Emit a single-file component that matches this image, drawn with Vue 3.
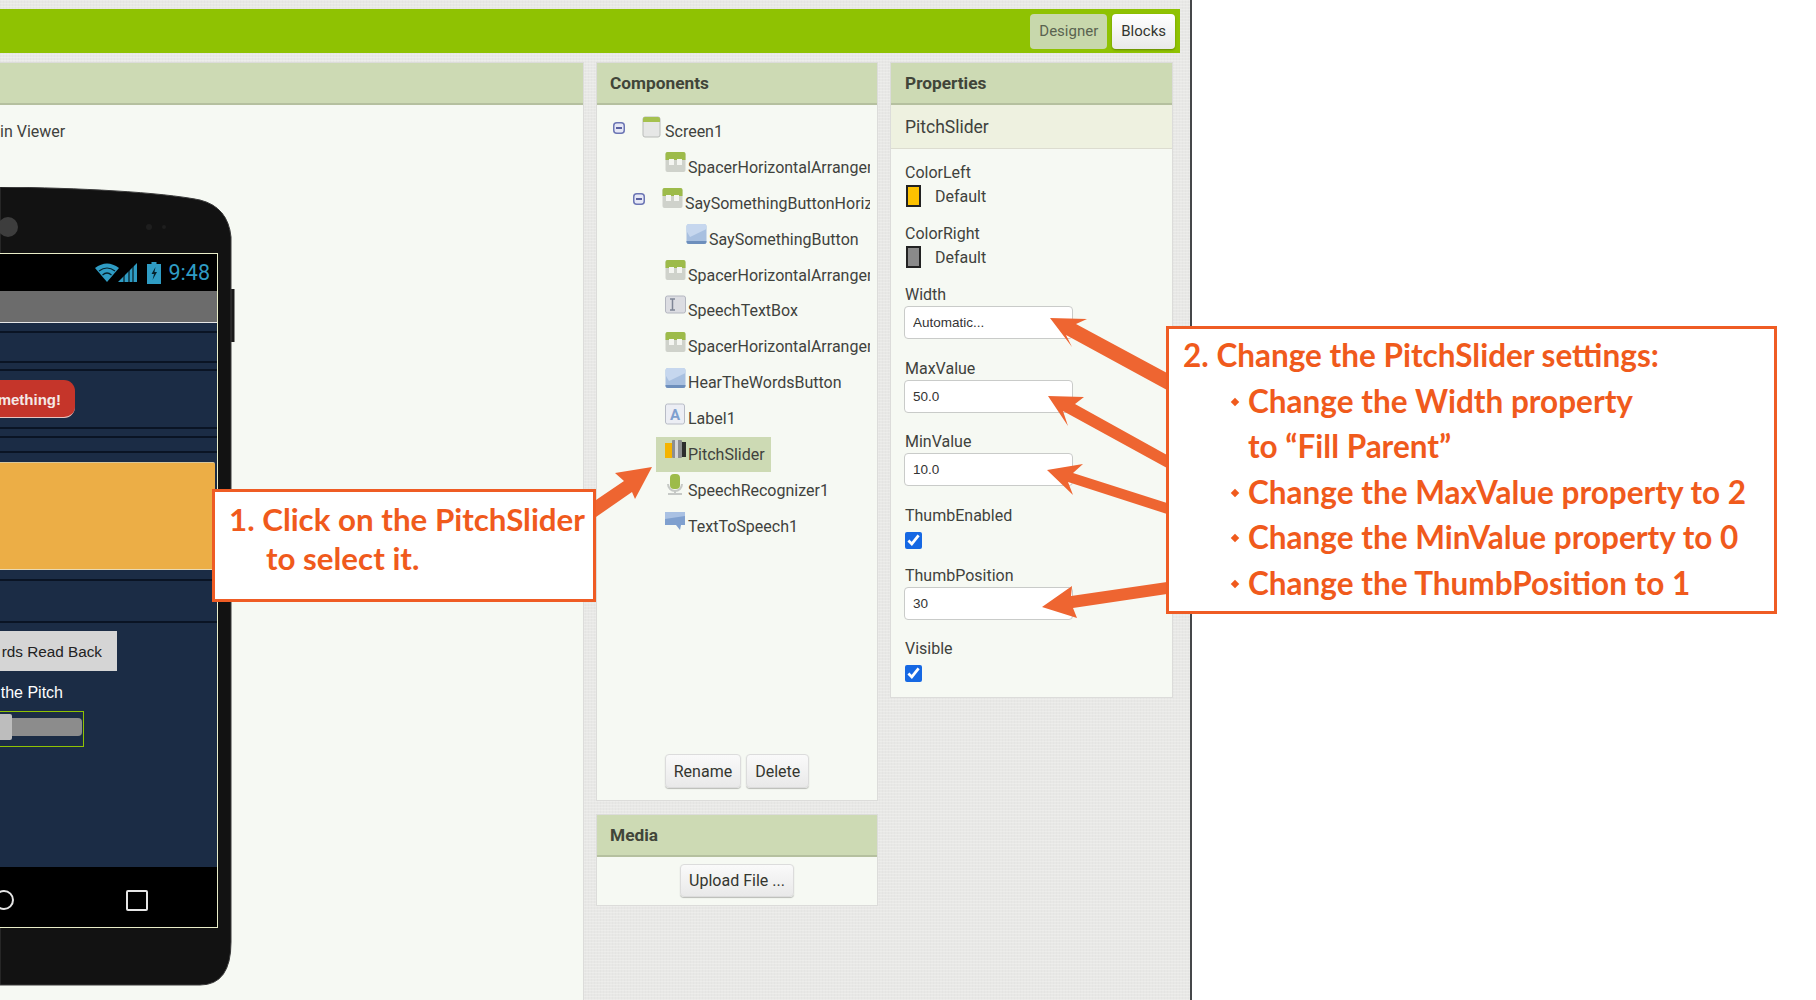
<script setup>
const tree = [
  { name: 'Screen1', icon: 'screen', pad: 16, toggle: true },
  { name: 'SpacerHorizontalArrangement1', icon: 'arrange', pad: 68 },
  { name: 'SaySomethingButtonHorizontalArrangement', icon: 'arrange', pad: 36, toggle: true },
  { name: 'SaySomethingButton', icon: 'button', pad: 89 },
  { name: 'SpacerHorizontalArrangement2', icon: 'arrange', pad: 68 },
  { name: 'SpeechTextBox', icon: 'textbox', pad: 68 },
  { name: 'SpacerHorizontalArrangement3', icon: 'arrange', pad: 68 },
  { name: 'HearTheWordsButton', icon: 'button', pad: 68 },
  { name: 'Label1', icon: 'label', pad: 68 },
  { name: 'PitchSlider', icon: 'slider', pad: 68, selected: true },
  { name: 'SpeechRecognizer1', icon: 'speech', pad: 68 },
  { name: 'TextToSpeech1', icon: 'tts', pad: 68 },
]

const props = [
  { label: 'ColorLeft', type: 'color', color: '#fdc200' },
  { label: 'ColorRight', type: 'color', color: '#8a8a8a' },
  { label: 'Width', type: 'input', value: 'Automatic...' },
  { label: 'MaxValue', type: 'input', value: '50.0' },
  { label: 'MinValue', type: 'input', value: '10.0' },
  { label: 'ThumbEnabled', type: 'check' },
  { label: 'ThumbPosition', type: 'input', value: '30' },
  { label: 'Visible', type: 'check' },
]

const steps = [
  ['Change the Width property', 'to “Fill Parent”'],
  ['Change the MaxValue property to 2'],
  ['Change the MinValue property to 0'],
  ['Change the ThumbPosition to 1'],
]

const arrows = [
  '652,467 615,473 624,481 596,500 596,517 632,492 635,499',
  '1050,318 1087,319 1076,324 1167,373 1167,390 1066,335 1072,347',
  '1048,396 1084,397 1075,404 1167,455 1167,468 1063,411 1068,426',
  '1047,470 1083,464 1073,473 1167,503 1167,514 1068,482 1073,495',
  '1042,607 1072,586 1071,596 1167,582 1167,594 1073,608 1077,618',
]
</script>

<template>
  <div class="page">
    <div class="studio">
      <header class="topbar">
        <button class="tab tab-on">Designer</button>
        <button class="tab">Blocks</button>
      </header>

      <div class="columns">
        <!-- viewer -->
        <section class="panel viewer">
          <div class="panel-head"></div>
          <div class="viewer-body">
            <div class="hidden-note">in Viewer</div>
            <div class="phone">
              <svg class="bezel" width="236" height="800" viewBox="0 0 236 800">
                <rect x="230" y="102" width="4.5" height="53" fill="#1a1a1a" />
                <path d="M0 0 C80 1 160 5 200 13 Q228 20 231 50 L231 755 Q231 798 200 798 L0 798 Z" fill="#121212" stroke="#3a3a3a" stroke-width="1" />
                <circle cx="8" cy="40" r="10" fill="#3d3d3d" />
                <circle cx="149" cy="40" r="3" fill="#1e1e1e" />
                <circle cx="164" cy="40" r="2" fill="#1e1e1e" />
              </svg>
              <div class="screen">
                <div class="statusbar">
                  <svg width="42" height="22" viewBox="0 0 42 22">
                    <path d="M0 6 Q12 -3 24 6 L12 20 Z" fill="#2f9cc4" />
                    <path d="M4 9 Q12 3 20 9" fill="none" stroke="#06222c" stroke-width="1.2" />
                    <path d="M7.5 13 Q12 9 16.5 13" fill="none" stroke="#06222c" stroke-width="1.2" />
                    <path d="M23 20 L42 1 L42 20 Z" fill="#2f9cc4" />
                    <path d="M29 20V10M34 20V6M38 20V3" stroke="#000" stroke-width="1" />
                  </svg>
                  <svg class="battery" width="14" height="22" viewBox="0 0 14 22">
                    <path d="M4.5 0H9.5V2H14V22H0V2H4.5Z" fill="#2f9cc4" />
                    <path d="M8.5 5 L4.5 12 H7 L5.5 18 L10 10 H7.5Z" fill="#06222c" />
                  </svg>
                  <span class="clock">9:48</span>
                </div>
                <div class="titlebar"></div>
                <div class="app-body">
                  <div class="stripe" style="height: 8px"></div>
                  <div class="stripe" style="height: 28px"></div>
                  <div class="stripe" style="height: 6px"></div>
                  <div class="stripe say-row"><span class="say-btn">mething!</span></div>
                  <div class="stripe" style="height: 7px"></div>
                  <div class="stripe" style="height: 13px"></div>
                  <div class="textbox-fill"></div>
                  <div class="stripe" style="height: 9px"></div>
                  <div class="stripe" style="height: 40px"></div>
                  <div class="hear-btn">rds Read Back</div>
                  <div class="pitch-label">the Pitch</div>
                  <div class="slider-box">
                    <span class="slider-track"></span>
                    <span class="slider-thumb"></span>
                  </div>
                </div>
                <div class="navbar">
                  <span class="nav-circle"></span>
                  <span class="nav-square"></span>
                </div>
              </div>
            </div>
          </div>
        </section>

        <!-- components + media -->
        <div class="middle">
          <section class="panel components">
            <div class="panel-head">Components</div>
            <div class="tree">
              <div v-for="n in tree" :key="n.name" class="node" :style="{ paddingLeft: n.pad + 'px' }">
                <div class="node-inner" :class="{ selected: n.selected }">
                  <svg v-if="n.toggle" class="toggle" width="12" height="12" viewBox="0 0 12 12">
                    <rect x="0.75" y="0.75" width="10.5" height="10.5" rx="3" fill="#e6e8f6" stroke="#6c76b4" stroke-width="1.5" />
                    <rect x="3" y="5.2" width="6" height="1.6" fill="#39408a" />
                  </svg>
                  <svg class="ico" width="21" height="22" viewBox="0 0 21 22">
                    <template v-if="n.icon === 'screen'">
                      <rect x="1" y="1" width="17" height="20" rx="2" fill="#e6e7e6" stroke="#b9bcb9" />
                      <path d="M1 6V3a2 2 0 0 1 2-2h13a2 2 0 0 1 2 2v3Z" fill="#a5c14f" />
                    </template>
                    <template v-else-if="n.icon === 'arrange'">
                      <rect x="0.5" y="1" width="20" height="20" rx="2" fill="#cfd2cb" />
                      <path d="M0.5 9V3a2 2 0 0 1 2-2h16a2 2 0 0 1 2 2v6Z" fill="#9dbb4a" />
                      <rect x="4" y="8" width="5" height="6" fill="#f4f5f1" />
                      <rect x="12" y="8" width="5" height="6" fill="#f4f5f1" />
                    </template>
                    <template v-else-if="n.icon === 'button'">
                      <rect x="0.5" y="1" width="20" height="20" rx="2.5" fill="#a8c0e0" />
                      <path d="M0.5 8V3.5a2.5 2.5 0 0 1 2.5-2.5h15a2.5 2.5 0 0 1 2.5 2.5V6L4 14Z" fill="#c6d7ee" />
                      <path d="M0.5 18H20.5V18.5a2.5 2.5 0 0 1-2.5 2.5H3a2.5 2.5 0 0 1-2.5-2.5Z" fill="#6d8fbc" />
                    </template>
                    <template v-else-if="n.icon === 'textbox'">
                      <rect x="0.5" y="1" width="20" height="17" rx="2" fill="#dcdde2" stroke="#b4b7c0" />
                      <path d="M5 4H10M5 15H10M7.5 4V15" stroke="#7f8696" stroke-width="1.5" fill="none" />
                    </template>
                    <template v-else-if="n.icon === 'label'">
                      <rect x="0.5" y="1" width="19" height="20" rx="2" fill="#eceef4" stroke="#b8bcc6" />
                      <text x="10" y="16.5" text-anchor="middle" class="ico-a">A</text>
                    </template>
                    <template v-else-if="n.icon === 'slider'">
                      <rect x="0" y="4" width="7" height="15" fill="#f5b400" />
                      <rect x="7" y="1" width="10" height="18" rx="1" fill="#8d8f90" />
                      <rect x="10" y="1" width="3" height="18" fill="#d5d6d6" />
                      <rect x="17" y="3" width="4" height="15" fill="#2d2d2d" />
                    </template>
                    <template v-else-if="n.icon === 'speech'">
                      <path d="M3 10a7 7 0 0 0 14 0" fill="none" stroke="#c6c9c6" stroke-width="2" />
                      <rect x="5" y="0" width="10" height="15" rx="4" fill="#9dbb4a" />
                      <rect x="3" y="19" width="14" height="2" fill="#c6c9c6" />
                      <rect x="9" y="16" width="2" height="4" fill="#c6c9c6" />
                    </template>
                    <template v-else>
                      <path d="M0 2H20V15H16L15 20L11 15H0Z" fill="#7fa0cf" />
                      <path d="M0 2H20V6L0 9Z" fill="#a9c1e3" />
                    </template>
                  </svg>
                  <span class="node-name">{{ n.name }}</span>
                </div>
              </div>
            </div>
            <div class="tree-actions">
              <button class="btn">Rename</button>
              <button class="btn">Delete</button>
            </div>
          </section>

          <section class="panel media">
            <div class="panel-head">Media</div>
            <div class="media-body"><button class="btn">Upload File ...</button></div>
          </section>
        </div>

        <!-- properties -->
        <section class="panel properties">
          <div class="panel-head">Properties</div>
          <div class="subhead">PitchSlider</div>
          <div class="prop-list">
            <div v-for="p in props" :key="p.label" class="prop" :class="'prop-' + p.type">
              <div class="prop-label">{{ p.label }}</div>
              <div v-if="p.type === 'color'" class="color-row">
                <span class="swatch" :style="{ background: p.color }"></span>
                <span>Default</span>
              </div>
              <input v-else-if="p.type === 'input'" class="prop-input" type="text" :value="p.value" readonly />
              <input v-else class="prop-check" type="checkbox" checked />
            </div>
          </div>
        </section>
      </div>
    </div>

    <!-- callouts -->
    <svg class="arrows" width="1816" height="1000" viewBox="0 0 1816 1000">
      <polygon v-for="a in arrows" :key="a" :points="a" fill="#ee6531" />
    </svg>

    <div class="callout callout-one">
      <div>1. Click on the PitchSlider</div>
      <div class="indent">to select it.</div>
    </div>

    <div class="callout callout-two">
      <div>2. Change the PitchSlider settings:</div>
      <ul class="steps">
        <li v-for="s in steps" :key="s[0]">
          <span class="diamond"></span>
          <div>
            <div v-for="line in s" :key="line">{{ line }}</div>
          </div>
        </li>
      </ul>
    </div>
  </div>
</template>

<style>
html, body { margin: 0; overflow: hidden; background: #fff; }
</style>

<style scoped>
.page {
  position: relative;
  width: 1816px;
  height: 1000px;
  overflow: hidden;
  background: #fff;
  font-family: Roboto, "Liberation Sans", sans-serif;
  color: #3f423d;
}

.studio {
  box-sizing: border-box;
  width: 1192px;
  height: 1000px;
  padding-top: 9px;
  background-color: #e8e8e6;
  background-image:
    repeating-linear-gradient(0deg, rgba(255,255,255,0.22) 0 1px, transparent 1px 3px),
    repeating-linear-gradient(90deg, rgba(0,0,0,0.015) 0 1px, transparent 1px 3px);
  border-right: 2px solid #45474a;
  overflow: hidden;
}

/* ═══ top bar ═══ */
.topbar {
  display: flex;
  justify-content: flex-end;
  align-items: center;
  gap: 5px;
  width: 1180px;
  height: 44px;
  padding-right: 5px;
  box-sizing: border-box;
  background: #8fc202;
}
.tab {
  height: 35px;
  padding: 0 9px;
  border: none;
  border-radius: 4px;
  background: linear-gradient(#ffffff, #e9e9e9);
  box-shadow: 0 1px 2px rgba(0,0,0,0.3);
  font: 15px Roboto, sans-serif;
  color: #33352f;
}
.tab-on {
  background: #c8d8ac;
  color: #5a6350;
  box-shadow: none;
}

/* ═══ panels ═══ */
.columns {
  display: flex;
  align-items: flex-start;
  gap: 14px;
  margin-top: 10px;
}
.panel {
  background: #f6f9f3;
  box-shadow: 0 0 0 1px #dcdcda;
}
.panel-head {
  box-sizing: border-box;
  height: 42px;
  padding: 0 13px;
  line-height: 41px;
  background: #cddab4;
  border-bottom: 2px solid #b5c09f;
  font-weight: 700;
  font-size: 17.3px;
  color: #414539;
}

.viewer {
  width: 583px;
  height: 937px;
}
.viewer-body {
  display: flex;
  flex-direction: column;
  align-items: flex-start;
}
.hidden-note {
  margin-top: 17px;
  height: 19px;
  line-height: 19px;
  font-size: 16px;
}

/* ═══ phone ═══ */
.phone {
  position: relative;
  box-sizing: border-box;
  width: 236px;
  height: 800px;
  margin-top: 46px;
  padding-top: 66px;
}
.bezel {
  position: absolute;
  left: 0;
  top: 0;
}
.screen {
  position: relative;
  box-sizing: border-box;
  width: 218px;
  height: 675px;
  display: flex;
  flex-direction: column;
  border: 1px solid #e9edc8;
  border-left: none;
  background: #1b2c45;
}
.statusbar {
  display: flex;
  justify-content: flex-end;
  align-items: center;
  height: 37px;
  padding: 0 7px 0 0;
  background: #000;
}
.battery { margin-left: 10px; }
.clock {
  margin-left: 8px;
  font-size: 21.5px;
  color: #2f9cc4;
}
.titlebar {
  height: 31px;
  background: #6c6c6c;
  border-bottom: 1px solid #e8e8e8;
}
.app-body {
  flex: 1;
  display: flex;
  flex-direction: column;
  overflow: hidden;
}
.stripe {
  flex: none;
  border-bottom: 2px solid #0a1424;
}
.say-row {
  display: flex;
  align-items: center;
  height: 56px;
}
.say-btn {
  box-sizing: border-box;
  display: flex;
  justify-content: flex-end;
  width: 75px;
  height: 38px;
  padding-right: 14px;
  white-space: nowrap;
  background: #c5352a;
  border-radius: 0 11px 11px 0;
  border-bottom: 1px solid #e6c4c0;
  font: 700 15px/40px "Liberation Sans", sans-serif;
  color: #f4e9e6;
}
.textbox-fill {
  flex: none;
  height: 108px;
  margin: 9px 2px 0 0;
  background: #ecae46;
  border-radius: 0 2px 0 0;
  border-top: 1px solid #d9c79b;
  border-bottom: 1px solid #e8d9b4;
  box-sizing: border-box;
}
.hear-btn {
  flex: none;
  display: flex;
  justify-content: flex-end;
  width: 117px;
  height: 40px;
  margin-top: 8px;
  background: #d5d5d5;
  padding-right: 15px;
  box-sizing: border-box;
  white-space: nowrap;
  font: 15.3px/41px "Liberation Sans", sans-serif;
  color: #222;
}
.pitch-label {
  flex: none;
  display: flex;
  justify-content: flex-end;
  width: 63px;
  height: 20px;
  margin-top: 11px;
  white-space: nowrap;
  font: 16px/21px "Liberation Sans", sans-serif;
  color: #fff;
}
.slider-box {
  flex: none;
  position: relative;
  box-sizing: border-box;
  width: 84px;
  height: 36px;
  margin-top: 9px;
  border: 1px solid #8fc202;
  border-left: none;
}
.slider-track {
  position: absolute;
  left: 0;
  right: 1px;
  top: 6px;
  height: 18px;
  background: #8c8c8c;
  border-radius: 0 4px 4px 0;
}
.slider-thumb {
  position: absolute;
  left: 0;
  top: 2px;
  width: 12px;
  height: 26px;
  background: #bdbdbd;
  border-radius: 0 2px 2px 0;
}
.navbar {
  position: relative;
  flex: none;
  height: 60px;
  background: #000;
}
.nav-circle {
  position: absolute;
  left: -6px;
  top: 23px;
  width: 20px;
  height: 20px;
  border: 2px solid #e6e6e6;
  border-radius: 50%;
  box-sizing: border-box;
}
.nav-square {
  position: absolute;
  left: 126px;
  top: 23px;
  width: 22px;
  height: 21px;
  border: 2px solid #e6e6e6;
  border-radius: 2px;
  box-sizing: border-box;
}

/* ═══ components ═══ */
.middle {
  display: flex;
  flex-direction: column;
  gap: 15px;
  width: 280px;
}
.components {
  display: flex;
  flex-direction: column;
  height: 737px;
}
.tree {
  flex: 1;
  margin-right: 7px;
  padding-top: 9px;
  overflow: hidden;
}
.node {
  height: 35.9px;
  box-sizing: border-box;
}
.node-inner {
  display: flex;
  align-items: center;
  height: 35px;
  white-space: nowrap;
}
.node-inner.selected {
  width: 115px;
  margin-left: -9px;
  padding-left: 9px;
  box-sizing: border-box;
  background: #cddab4;
}
.toggle {
  flex: none;
  margin: -8px 17px 0 0;
}
.ico {
  flex: none;
  margin: -10px 2px 0 0;
}
.ico-a {
  font: 700 15px Roboto, sans-serif;
  fill: #7fa0cf;
}
.node-name {
  font-size: 16px;
}
.tree-actions {
  display: flex;
  justify-content: center;
  gap: 5px;
  padding: 0 0 12px;
}
.btn {
  height: 34px;
  padding: 0 8px;
  border: 1px solid #dcdcdc;
  border-radius: 4px;
  background: linear-gradient(#fafafa, #e9e9e9);
  box-shadow: 0 1px 1px rgba(0,0,0,0.25);
  font: 16px Roboto, sans-serif;
  color: #34362f;
}
.media-body {
  display: flex;
  justify-content: center;
  height: 48px;
  padding-top: 7px;
  box-sizing: border-box;
}
.media-body .btn { height: 33px; }

/* ═══ properties ═══ */
.properties {
  width: 281px;
  height: 634px;
}
.properties .panel-head { padding-left: 14px; }
.subhead {
  box-sizing: border-box;
  height: 44px;
  padding: 0 14px;
  line-height: 44px;
  background: #eef1e0;
  border-bottom: 1px solid #dcdcd0;
  font-size: 17.5px;
}
.prop-list {
  padding: 14px 0 0 13px;
}
.prop { font-size: 16px; }
.prop-label {
  height: 20px;
  line-height: 20px;
  padding-left: 1px;
}
.prop-color { height: 61px; }
.prop-input { height: 73.5px; }
.prop.prop-check { height: 60px; }
.color-row {
  display: flex;
  align-items: center;
  gap: 14px;
  height: 24px;
  padding-left: 2px;
  margin-top: 1px;
}
.swatch {
  box-sizing: border-box;
  width: 15px;
  height: 22px;
  border: 2px solid #222;
}
input.prop-input {
  display: block;
  box-sizing: border-box;
  width: 169px;
  height: 33px;
  margin-top: 1px;
  padding: 0 8px;
  border: 1px solid #c9cbc9;
  border-radius: 4px;
  background: #fff;
  font: 13.5px "Liberation Sans", sans-serif;
  color: #333;
  outline: none;
}
input.prop-check {
  display: block;
  width: 17px;
  height: 17px;
  margin: 6px 0 0 1px;
  accent-color: #1668e3;
}

/* ═══ callouts ═══ */
.arrows {
  position: absolute;
  left: 0;
  top: 0;
  pointer-events: none;
}
.callout {
  position: absolute;
  box-sizing: border-box;
  background: #fff;
  border: 3px solid #ef5c24;
  font-family: Lato, "Open Sans", sans-serif;
  font-weight: 700;
  color: #f05a1c;
  white-space: nowrap;
}
.callout-one {
  left: 212px;
  top: 489px;
  width: 384px;
  height: 113px;
  padding: 8px 0 0 14px;
  font-size: 31.3px;
  line-height: 39px;
}
.indent { padding-left: 37px; }
.callout-two {
  left: 1166px;
  top: 326px;
  width: 611px;
  height: 288px;
  padding: 4px 0 0 14px;
  font-size: 31.5px;
  line-height: 45.6px;
}
.steps {
  list-style: none;
  margin: 0;
  padding: 0 0 0 49px;
}
.steps li {
  display: flex;
  align-items: flex-start;
  gap: 10px;
}
.diamond {
  flex: none;
  width: 6px;
  height: 6px;
  margin-top: 20px;
  background: #f05a1c;
  transform: rotate(45deg);
}
</style>
